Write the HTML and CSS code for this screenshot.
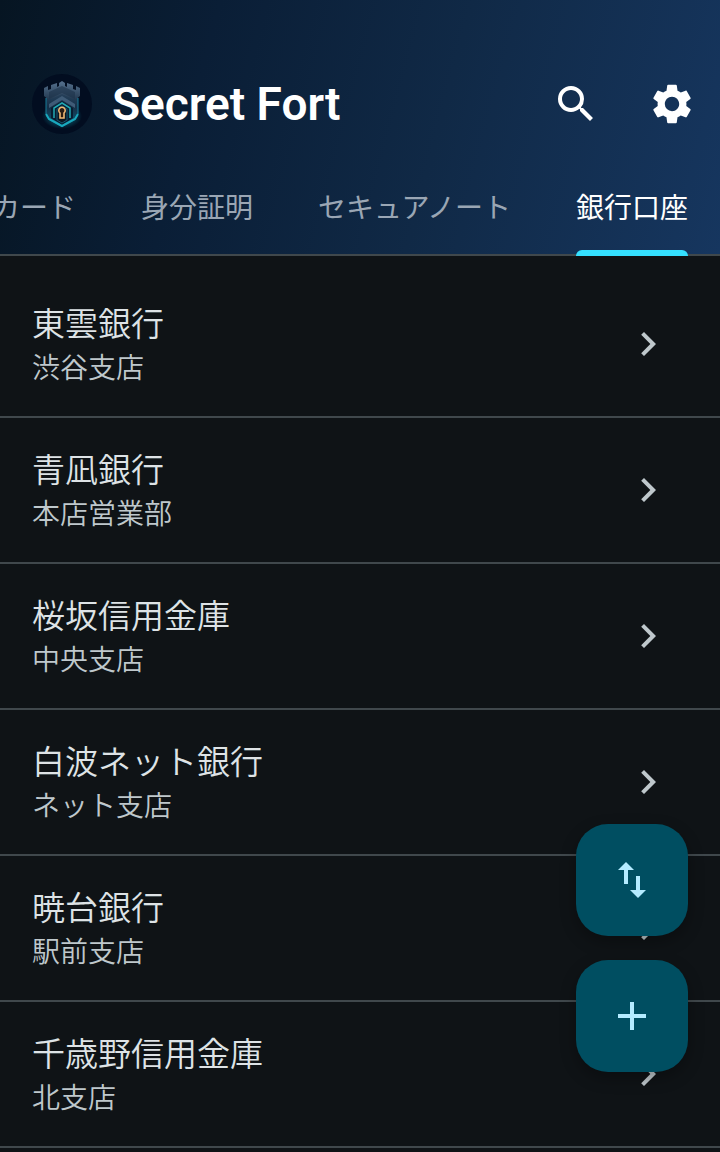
FILE: index.html
```html
<!DOCTYPE html>
<html lang="ja">
<head>
    <meta charset="utf-8">
    <meta name="viewport" content="width=device-width, initial-scale=1">
    <title>Secret Fort</title>
    <link rel="stylesheet" href="styles.css">
</head>
<body>
    <header class="header">
        <div class="toolbar">
            <svg class="logo" viewBox="0 0 60 60" aria-hidden="true">
                <defs>
                    <linearGradient id="wall" x1="0" y1="0" x2="0" y2="1">
                        <stop offset="0" stop-color="#2c4560"/>
                        <stop offset="0.5" stop-color="#153048"/>
                        <stop offset="1" stop-color="#0d5f7c"/>
                    </linearGradient>
                    <linearGradient id="stone" x1="0" y1="0" x2="0" y2="1">
                        <stop offset="0" stop-color="#56718e"/>
                        <stop offset="1" stop-color="#22384f"/>
                    </linearGradient>
                    <radialGradient id="glow">
                        <stop offset="0" stop-color="#12a5b8" stop-opacity="0.8"/>
                        <stop offset="1" stop-color="#12a5b8" stop-opacity="0"/>
                    </radialGradient>
                </defs>
                <circle cx="30" cy="30" r="30" fill="#020d20"/>
                <ellipse cx="30" cy="42" rx="20" ry="13" fill="url(#glow)"/>
                <path d="M14 21l16-6 16 6v21l-3 4-13 7-13-7-3-4z" fill="url(#wall)"/>
                <path d="M12 14l4-2v4l3-1v-4l6-2v4l2-1V9l3-2 3 2v3l2 1V9l6 2v4l3 1v-4l4 2v8l-5 4-13-6-13 6-5-4z" fill="url(#stone)"/>
                <path d="M30 12l-13 6v7l13-6 13 6v-7z" fill="#1d324a" opacity="0.6"/>
                <path d="M17 30l13-8 13 8v4l-13-8-13 8z" fill="#3f5b77"/>
                <path d="M19 34l11-7 11 7v10l-11 7-11-7z" fill="#081d31"/>
                <path d="M14 40l3 5 13 7 13-7 3-5" fill="none" stroke="#19a8bd" stroke-width="2"/>
                <path d="M14 24v16M46 24v16" stroke="#147c99" stroke-width="1"/>
                <path d="M22 44V34l8-5 8 5v10" fill="none" stroke="#20a9b4" stroke-width="1.5"/>
                <path d="M25 46V35l5-3 5 3v11l-5 3z" fill="#0a1622" stroke="#15566e" stroke-width="1"/>
                <path d="M28 44v-5a3.2 3.2 0 1 1 4 0v5z" fill="#2a1c14" stroke="#f0b873" stroke-width="1.6"/>
            </svg>
            <h1 class="title">Secret Fort</h1>
            <button class="icon-button" type="button" aria-label="検索">
                <svg class="icon" viewBox="0 0 24 24"><path d="M15.5 14h-.79l-.28-.27A6.47 6.47 0 0 0 16 9.5 6.5 6.5 0 1 0 9.5 16c1.61 0 3.09-.59 4.23-1.57l.27.28v.79l5 4.99L20.49 19l-4.99-5zm-6 0C7.01 14 5 11.99 5 9.5S7.01 5 9.5 5 14 7.01 14 9.5 11.99 14 9.5 14z"/></svg>
            </button>
            <button class="icon-button" type="button" aria-label="設定">
                <svg class="icon" viewBox="0 0 24 24"><path d="M19.14 12.94c.04-.3.06-.61.06-.94 0-.32-.02-.64-.07-.94l2.03-1.58c.18-.14.23-.41.12-.61l-1.92-3.32c-.12-.22-.37-.29-.59-.22l-2.39.96c-.5-.38-1.03-.7-1.62-.94l-.36-2.54c-.04-.24-.24-.41-.48-.41h-3.84c-.24 0-.43.17-.47.41l-.36 2.54c-.59.24-1.13.57-1.62.94l-2.39-.96c-.22-.08-.47 0-.59.22L2.74 8.87c-.12.21-.08.47.12.61l2.03 1.58c-.05.3-.09.63-.09.94s.02.64.07.94l-2.03 1.58c-.18.14-.23.41-.12.61l1.92 3.32c.12.22.37.29.59.22l2.39-.96c.5.38 1.03.7 1.62.94l.36 2.54c.05.24.24.41.48.41h3.84c.24 0 .44-.17.47-.41l.36-2.54c.59-.24 1.13-.56 1.62-.94l2.39.96c.22.08.47 0 .59-.22l1.92-3.32c.12-.22.07-.47-.12-.61l-2.01-1.58zM12 15.6A3.61 3.61 0 0 1 8.4 12c0-1.98 1.62-3.6 3.6-3.6s3.6 1.62 3.6 3.6-1.62 3.6-3.6 3.6z"/></svg>
            </button>
        </div>
        <nav class="tabs">
            <a class="tab" href="#card">カード</a>
            <a class="tab" href="#id">身分証明</a>
            <a class="tab" href="#note">セキュアノート</a>
            <a class="tab active" href="#bank" aria-current="page">銀行口座</a>
        </nav>
    </header>

    <main>
        <ul class="list">
            <li><a class="row" href="#bank-1">
                <span class="text"><span class="name">東雲銀行</span><span class="branch">渋谷支店</span></span>
                <svg class="icon" viewBox="0 0 24 24"><path d="M10 6 8.59 7.41 13.17 12l-4.58 4.59L10 18l6-6z"/></svg>
            </a></li>
            <li><a class="row" href="#bank-2">
                <span class="text"><span class="name">青凪銀行</span><span class="branch">本店営業部</span></span>
                <svg class="icon" viewBox="0 0 24 24"><path d="M10 6 8.59 7.41 13.17 12l-4.58 4.59L10 18l6-6z"/></svg>
            </a></li>
            <li><a class="row" href="#bank-3">
                <span class="text"><span class="name">桜坂信用金庫</span><span class="branch">中央支店</span></span>
                <svg class="icon" viewBox="0 0 24 24"><path d="M10 6 8.59 7.41 13.17 12l-4.58 4.59L10 18l6-6z"/></svg>
            </a></li>
            <li><a class="row" href="#bank-4">
                <span class="text"><span class="name">白波ネット銀行</span><span class="branch">ネット支店</span></span>
                <svg class="icon" viewBox="0 0 24 24"><path d="M10 6 8.59 7.41 13.17 12l-4.58 4.59L10 18l6-6z"/></svg>
            </a></li>
            <li><a class="row" href="#bank-5">
                <span class="text"><span class="name">暁台銀行</span><span class="branch">駅前支店</span></span>
                <svg class="icon" viewBox="0 0 24 24"><path d="M10 6 8.59 7.41 13.17 12l-4.58 4.59L10 18l6-6z"/></svg>
            </a></li>
            <li><a class="row" href="#bank-6">
                <span class="text"><span class="name">千歳野信用金庫</span><span class="branch">北支店</span></span>
                <svg class="icon" viewBox="0 0 24 24"><path d="M10 6 8.59 7.41 13.17 12l-4.58 4.59L10 18l6-6z"/></svg>
            </a></li>
        </ul>
    </main>

    <div class="fabs">
        <button class="fab" type="button" aria-label="並べ替え">
            <svg class="icon" viewBox="0 0 24 24"><path d="M16 17.01V10h-2v7.01h-3L15 21l4-3.99h-3zM9 3 5 6.99h3V14h2V6.99h3L9 3z"/></svg>
        </button>
        <button class="fab" type="button" aria-label="追加">
            <svg class="icon" viewBox="0 0 24 24"><path d="M19 13h-6v6h-2v-6H5v-2h6V5h2v6h6v2z"/></svg>
        </button>
    </div>
</body>
</html>
```

FILE: styles.css
```css
* {
    box-sizing: border-box;
}

body {
    margin: 0;
    background-color: #0f1316;
    color: #dee3e6;
    font-family: Roboto, "Noto Sans CJK JP", sans-serif;
}

a {
    color: inherit;
    text-decoration: none;
}

button {
    border: 0;
    padding: 0;
    cursor: pointer;
}

.icon {
    display: block;
    flex: none;
    width: 48px;
    height: 48px;
    fill: currentColor;
}

/* header */
.header {
    padding-top: 48px;
    background: linear-gradient(105deg, #061522 0%, #0a1e36 28%, #102946 60%, #16365f 100%);
    color: #fff;
}

.toolbar {
    display: flex;
    align-items: center;
    height: 112px;
    padding-left: 32px;
}

.logo {
    flex: none;
    width: 60px;
    height: 60px;
}

.title {
    flex: 1;
    margin: 0 0 0 20px;
    font-size: 46px;
    line-height: 56px;
    font-weight: 600;
}

.icon-button {
    display: flex;
    align-items: center;
    justify-content: center;
    width: 96px;
    height: 96px;
    background: none;
    color: #fff;
}

.tabs {
    display: flex;
    justify-content: flex-end;
    gap: 65px;
    height: 96px;
    padding-right: 32px;
    overflow: hidden;
    box-shadow: inset 0 -2px #40484c;
}

.tab {
    flex: none;
    font-size: 28px;
    line-height: 98px;
    font-weight: 400;
    color: #9aa6b4;
}

.tab.active {
    position: relative;
    color: #fff;
}

.tab.active::after {
    content: "";
    position: absolute;
    left: 0;
    right: 0;
    bottom: 0;
    height: 6px;
    border-radius: 6px 6px 0 0;
    background-color: #35e0ff;
}

/* account list */
.list {
    list-style: none;
    margin: 0;
    padding: 16px 0 0;
}

.row {
    display: flex;
    align-items: center;
    justify-content: space-between;
    padding: 28px 48px 28px 32px;
    border-bottom: 2px solid #40484c;
}

.text {
    display: flex;
    flex-direction: column;
}

.name {
    font-size: 33px;
    line-height: 50px;
    font-weight: 350;
}

.branch {
    font-size: 28px;
    line-height: 38px;
    font-weight: 350;
    color: #bfc8cc;
}

.row .icon {
    color: #bfc8cc;
}

/* floating buttons */
.fabs {
    position: fixed;
    right: 32px;
    bottom: 80px;
    display: flex;
    flex-direction: column;
    gap: 24px;
}

.fab {
    display: flex;
    align-items: center;
    justify-content: center;
    width: 112px;
    height: 112px;
    border-radius: 32px;
    background-color: #004e61;
    color: #b4ebff;
    box-shadow: 0 6px 16px rgba(0, 0, 0, 0.3);
}
```
